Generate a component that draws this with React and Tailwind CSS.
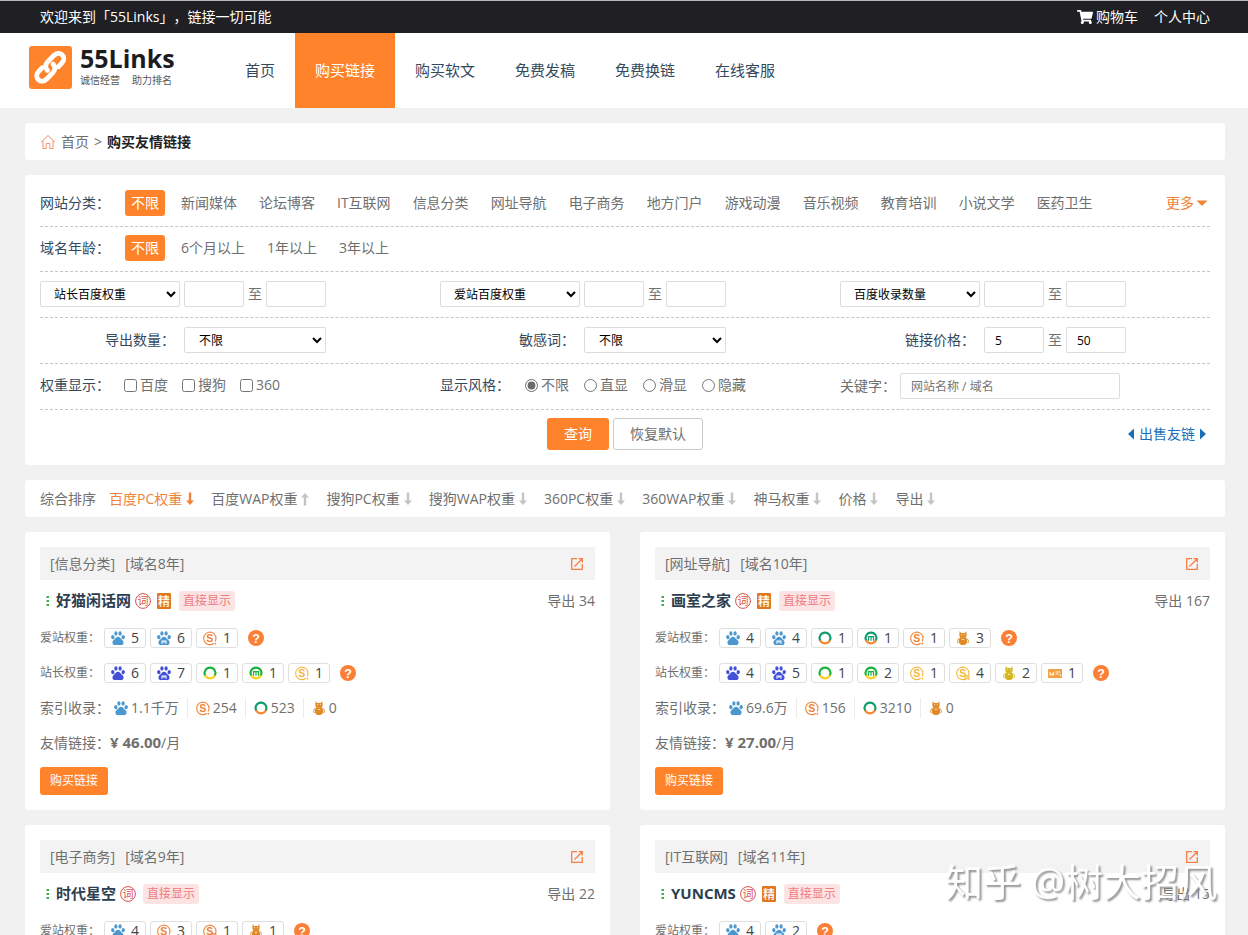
import { useState } from "react";
import clsx from "clsx";
import { FaShoppingCart } from "react-icons/fa";

// ─── 数据 ─────────────────────────────────────────────────────────────────────
const NAV = ["首页", "购买链接", "购买软文", "免费发稿", "免费换链", "在线客服"];

const CATEGORIES = [
  "不限",
  "新闻媒体",
  "论坛博客",
  "IT互联网",
  "信息分类",
  "网址导航",
  "电子商务",
  "地方门户",
  "游戏动漫",
  "音乐视频",
  "教育培训",
  "小说文学",
  "医药卫生",
];

const AGES = ["不限", "6个月以上", "1年以上", "3年以上"];

const SORTS = [
  { label: "百度PC权重" },
  { label: "百度WAP权重", up: true },
  { label: "搜狗PC权重" },
  { label: "搜狗WAP权重" },
  { label: "360PC权重" },
  { label: "360WAP权重" },
  { label: "神马权重" },
  { label: "价格" },
  { label: "导出" },
];

const SITES = [
  {
    name: "好猫闲话网",
    category: "信息分类",
    age: "域名8年",
    outLinks: 34,
    featured: true,
    aizhan: [["baidu", 5], ["baiduM", 6], ["sogou", 1]],
    chinaz: [["baidu", 6], ["baiduM", 7], ["so", 1], ["soM", 1], ["sogou", 1]],
    index: [["baidu", "1.1千万"], ["sogou", "254"], ["so", "523"], ["shenma", "0"]],
    price: "46.00",
  },
  {
    name: "画室之家",
    category: "网址导航",
    age: "域名10年",
    outLinks: 167,
    featured: true,
    aizhan: [["baidu", 4], ["baiduM", 4], ["so", 1], ["soM", 1], ["sogou", 1], ["shenma", 3]],
    chinaz: [
      ["baidu", 4],
      ["baiduM", 5],
      ["so", 1],
      ["soM", 2],
      ["sogou", 1],
      ["sogouM", 4],
      ["shenma", 2],
      ["toutiao", 1],
    ],
    index: [["baidu", "69.6万"], ["sogou", "156"], ["so", "3210"], ["shenma", "0"]],
    price: "27.00",
  },
  {
    name: "时代星空",
    category: "电子商务",
    age: "域名9年",
    outLinks: 22,
    aizhan: [["baidu", 4], ["sogou", 3], ["sogouM", 1], ["shenma", 1]],
  },
  {
    name: "YUNCMS",
    category: "IT互联网",
    age: "域名11年",
    outLinks: 15,
    featured: true,
    aizhan: [["baidu", 4], ["baiduM", 2]],
  },
];

// 爱站、站长两套图标配色
const PALETTES = {
  aizhan: { paw: "#4a98cf", top: "#109c6b", bottom: "#f7882f", s: "#f0833a", cat: "#e08a26" },
  chinaz: { paw: "#4350d8", top: "#18b33c", bottom: "#f9cf1c", s: "#f5b83d", cat: "#d6b51c" },
};

// ─── 图标 ─────────────────────────────────────────────────────────────────────
function Paw({ color, mobile }) {
  return (
    <svg viewBox="0 0 16 16" className="h-4 w-4 shrink-0">
      <g fill={color}>
        <ellipse cx="2.8" cy="7.2" rx="1.7" ry="2.1" transform="rotate(-14 2.8 7.2)" />
        <ellipse cx="5.9" cy="3.4" rx="1.6" ry="2.2" />
        <ellipse cx="10.1" cy="3.4" rx="1.6" ry="2.2" />
        <ellipse cx="13.2" cy="7.2" rx="1.7" ry="2.1" transform="rotate(14 13.2 7.2)" />
        <path d="M8 6.8c-1.9 0-2.5 1.7-3.7 2.8C3 10.8 2.1 11.6 2.5 13.3c.4 1.600 1.700 2 3.200 1.800 1.600-.3 3-.3 4.600 0 1.500.2 2.800-.2 3.200-1.800.4-1.700-.5-2.500-1.800-3.700C10.500 8.500 9.900 6.800 8 6.800z" />
      </g>
      {mobile && (
        <path d="M6 13.800v-2.800h4v2.800M8 11v2" fill="none" stroke="#fff" strokeWidth="1.1" />
      )}
    </svg>
  );
}

function Ring({ top, bottom, mobile }) {
  return (
    <svg viewBox="0 0 16 16" className="h-4 w-4 shrink-0" fill="none">
      <path d="M2.9 9.700A5.400 5.400 0 0 0 13.100 9.700" stroke={bottom} strokeWidth="2.200" />
      <path d="M3.100 10.200A5.400 5.400 0 1 1 12.900 10.200" stroke={top} strokeWidth="2.200" />
      {mobile && (
        <path d="M5.500 10.800V6.700h5v4.100M8 6.700v4.100" stroke={top} strokeWidth="1.200" />
      )}
    </svg>
  );
}

function Sogou({ color, mobile }) {
  return (
    <svg viewBox="0 0 16 16" className="h-4 w-4 shrink-0">
      <path
        d="M11.700 13.200A6.200 6.200 0 1 1 14 8.700c-.1 1.100-.4 2-.9 2.800"
        fill="none"
        stroke={color}
        strokeWidth="1.100"
      />
      <text
        x="7.800"
        y="11.700"
        textAnchor="middle"
        fontSize="10.500"
        fontWeight="700"
        fontFamily="Liberation Sans, sans-serif"
        fill={color}
      >
        S
      </text>
      <circle cx="13.400" cy="13.700" r=".9" fill={color} />
      {mobile && (
        <path d="M10 14.500v-3.800h4v3.800M12 10.700v3.800" fill="none" stroke={color} strokeWidth="1" />
      )}
    </svg>
  );
}

function Shenma({ color }) {
  return (
    <svg viewBox="0 0 16 16" className="h-4 w-4 shrink-0" fill={color}>
      <path d="M4.700 1l1.300 1.900h4L11.300 1l.4 4.200c-.1 1.200-.8 2-1.700 2.300H6c-.9-.3-1.600-1.100-1.700-2.300z" />
      <path d="M5 7.200h6c.9 1.500 1.300 3.400 1 5-.3 1.900-1.600 2.800-4 2.800s-3.700-.9-4-2.800c-.3-1.600.1-3.500 1-5z" />
      <path
        d="M4.100 8.500c-1.500.9-1.900 2.800-1 4.600M11.900 8.500c1.500.9 1.900 2.800 1 4.600"
        fill="none"
        stroke={color}
        strokeWidth="1"
      />
      <path d="M6 4.700h1.200M8.800 4.700H10M6.800 9.500h2.400" stroke="#fff" strokeWidth=".7" />
    </svg>
  );
}

function Toutiao() {
  return (
    <svg viewBox="0 0 16 16" className="h-4 w-4 shrink-0">
      <rect x="1" y="4" width="14" height="9" rx=".8" fill="#f3a044" />
      <path
        d="M3 10.800V7.200l2 3.300 1.500-3.300v3.300M8.500 7h4.800M8.500 9h3M13.300 9v2"
        fill="none"
        stroke="#fff3df"
        strokeWidth="1"
      />
    </svg>
  );
}

function EngineIcon({ type, palette }) {
  const p = PALETTES[palette];
  if (type === "baidu") return <Paw color={p.paw} />;
  if (type === "baiduM") return <Paw color={p.paw} mobile />;
  if (type === "so") return <Ring top={p.top} bottom={p.bottom} />;
  if (type === "soM") return <Ring top={p.top} bottom={p.bottom} mobile />;
  if (type === "sogou") return <Sogou color={p.s} />;
  if (type === "sogouM") return <Sogou color={p.s} mobile />;
  if (type === "shenma") return <Shenma color={p.cat} />;
  return <Toutiao />;
}

function Logo() {
  return (
    <svg viewBox="0 0 43 43" className="h-[43px] w-[43px] shrink-0">
      <rect width="43" height="43" rx="3" fill="#ff832b" />
      <g fill="none" stroke="#fff" strokeWidth="4.800" strokeLinecap="round">
        <path d="M18.500 24.500c-2.800-3-2.300-6 .3-8.800l6-6.200c2.700-2.700 6-2.900 8.300-.7 2.300 2.300 2.200 5.600-.3 8.300l-3.500 3.700" />
        <path d="M24 18c2.800 3 2.300 6-.3 8.800l-6 6.200c-2.700 2.700-6 2.900-8.300.7-2.300-2.300-2.200-5.600.3-8.300l3.500-3.700" />
      </g>
    </svg>
  );
}

function HomeIcon() {
  return (
    <svg viewBox="0 0 16 16" className="h-4 w-4 shrink-0" fill="none" stroke="#f0936a">
      <path d="M1 8.300L8 1.500l7 6.800M3 6.800v7.700h3.200V9.500h3.600v5h3.200V6.800" strokeLinejoin="round" />
    </svg>
  );
}

function SortArrow({ up, active }) {
  return (
    <svg
      viewBox="0 0 16 16"
      className={clsx("h-4 w-4 shrink-0", up && "rotate-180")}
      fill={active ? "#f0833a" : "#c4c4c4"}
    >
      <path d="M6.800 1.500h2.400v8H12L8 14 4 9.500h2.800z" />
    </svg>
  );
}

function OpenIcon() {
  return (
    <svg viewBox="0 0 14 14" className="h-3.5 w-3.5" fill="none" stroke="#f57f45" strokeWidth="1.300">
      <path d="M7 1.700H1.700v10.600h10.600V7M4.500 9.500l7.500-7.500M8.500 1.700h3.800v3.800" />
    </svg>
  );
}

function HelpIcon() {
  return (
    <svg viewBox="0 0 16 16" className="ml-1.5 h-4 w-4 shrink-0">
      <circle cx="8" cy="8" r="8" fill="#fb7f34" />
      <text
        x="8"
        y="12.500"
        textAnchor="middle"
        fontSize="12.500"
        fontWeight="700"
        fontFamily="Liberation Sans, sans-serif"
        fill="#fff"
      >
        ?
      </text>
    </svg>
  );
}

function WordBadge() {
  return (
    <svg viewBox="0 0 16 16" className="h-4 w-4 shrink-0">
      <circle cx="8" cy="8" r="7.400" fill="#fff" stroke="#d9534f" />
      <text x="8" y="12" textAnchor="middle" fontSize="11" fill="#d9534f">
        词
      </text>
    </svg>
  );
}

function FeaturedBadge() {
  return (
    <svg viewBox="0 0 16 16" className="ml-[5px] h-4 w-4 shrink-0">
      <rect x="1" width="14" height="16" rx="1" fill="#e0771c" />
      <text x="8" y="12.500" textAnchor="middle" fontSize="12" fontWeight="500" fill="#fff">
        精
      </text>
    </svg>
  );
}

// ─── 表单小组件 ───────────────────────────────────────────────────────────────
const FIELD = "h-[26px] rounded-xs border border-[#dcdcdc] bg-white text-xs text-black";

function PillRow({ label, items, children }) {
  const [active, setActive] = useState(items[0]);
  return (
    <div className="flex items-center border-b border-dashed border-[#c6c6c6] pt-2 pb-2.5">
      <span className="w-[85px] shrink-0 text-[#34495e]">{label}：</span>
      <div className="flex flex-1 gap-2.5">
        {items.map((item) => (
          <button
            key={item}
            type="button"
            onClick={() => setActive(item)}
            className={clsx(
              "h-[26px] cursor-pointer rounded-[3px] px-1.5 whitespace-nowrap",
              item === active && "bg-[#ff832b] text-white"
            )}
          >
            {item}
          </button>
        ))}
      </div>
      {children}
    </div>
  );
}

function FieldRow({ children }) {
  return (
    <div className="grid grid-cols-[400fr_400fr_370fr] border-b border-dashed border-[#c6c6c6] pt-[9px] pb-2.5">
      {children}
    </div>
  );
}

function Range({ label, from = "", to = "" }) {
  return (
    <>
      <input aria-label={`${label}最小值`} defaultValue={from} className={clsx(FIELD, "w-[60px] px-2.5")} />
      <span>至</span>
      <input aria-label={`${label}最大值`} defaultValue={to} className={clsx(FIELD, "w-[60px] px-2.5")} />
    </>
  );
}

function WeightRange({ name }) {
  return (
    <div className="flex items-center gap-1">
      <select aria-label="指标" className={clsx(FIELD, "w-[140px] pl-[9px]")}>
        <option>{name}</option>
      </select>
      <Range label={name} />
    </div>
  );
}

function LabeledSelect({ id, label }) {
  return (
    <div className="flex items-center gap-1">
      <label htmlFor={id} className="w-[140px] pr-[5px] text-right text-[#34495e]">
        {label}：
      </label>
      <select id={id} className={clsx(FIELD, "w-[142px] pl-2.5")}>
        <option>不限</option>
      </select>
    </div>
  );
}

// ─── 站点卡片 ─────────────────────────────────────────────────────────────────
function WeightRow({ label, palette, items }) {
  return (
    <div className="flex h-[35px] items-center gap-1">
      <span className="w-[60px] shrink-0 text-xs whitespace-nowrap">{label}：</span>
      {items.map(([type, value]) => (
        <span
          key={type}
          className="flex h-5 w-[42px] items-center justify-between rounded-[3px] border border-[#dfdfdf] pr-1.5 pl-[5px] text-[#444]"
        >
          <EngineIcon type={type} palette={palette} />
          {value}
        </span>
      ))}
      <HelpIcon />
    </div>
  );
}

function SiteCard({ site }) {
  return (
    <article className="rounded-[3px] bg-white p-[15px]">
      <div className="flex h-[33px] items-center justify-between bg-[#f3f3f3] pr-[11px] pl-2.5">
        <span className="flex gap-2.5">
          <span>[{site.category}]</span>
          <span>[{site.age}]</span>
        </span>
        <a href="#open" aria-label={`打开${site.name}`}>
          <OpenIcon />
        </a>
      </div>

      <div className="flex h-10 items-center pt-0.5 pl-1.5">
        <svg viewBox="0 0 4 12" className="mr-1.5 h-3 w-1" fill="#3fae4d">
          <path d="M.5 1h2.500v2H.5zM.5 5h2.500v2H.5zM.5 9h2.500v2H.5z" />
        </svg>
        <h3 className="mr-1 text-[15px] font-bold text-[#2c3e50]">{site.name}</h3>
        <WordBadge />
        {site.featured && <FeaturedBadge />}
        <span className="ml-[7px] h-5 rounded-[3px] bg-[#fde4e4] px-1 text-xs leading-5 text-[#ee7b7f]">
          直接显示
        </span>
        <span className="ml-auto">导出 {site.outLinks}</span>
      </div>

      <WeightRow label="爱站权重" palette="aizhan" items={site.aizhan} />
      {site.chinaz && <WeightRow label="站长权重" palette="chinaz" items={site.chinaz} />}

      {site.index && (
        <div className="flex h-[35px] items-center">
          <span className="w-[73px]">索引收录：</span>
          <ul className="flex divide-x divide-[#ececec]">
            {site.index.map(([type, value]) => (
              <li key={type} className="flex items-center gap-0.5 pr-2 pl-[7px] first:pl-0">
                <EngineIcon type={type} palette="aizhan" />
                {value}
              </li>
            ))}
          </ul>
        </div>
      )}

      {site.price && (
        <>
          <p className="h-[35px] leading-[35px]">
            友情链接：<b className="text-[15px]">¥ {site.price}</b>/月
          </p>
          <button
            type="button"
            className="mt-[7px] block h-7 w-[68px] cursor-pointer rounded-[3px] bg-[#ff832b] text-xs text-white"
          >
            购买链接
          </button>
        </>
      )}
    </article>
  );
}

// ─── 页面 ─────────────────────────────────────────────────────────────────────
export default function App() {
  const [sort, setSort] = useState("百度PC权重");

  return (
    <div className="min-h-screen bg-[#f1f1f1] font-['Open_Sans','Noto_Sans_CJK_SC',sans-serif] text-sm text-[#6f6f6f]">
      {/* 顶栏 */}
      <div className="flex h-[33px] items-center justify-between border-t border-[#b5bab9] bg-[#202024] pr-[38px] pl-10 text-white">
        <span className="[text-spacing-trim:space-all]">欢迎来到「55Links」，链接一切可能</span>
        <div className="flex items-center gap-4">
          <a href="#cart" className="flex items-center gap-[3px]">
            <FaShoppingCart className="h-4 w-4" />
            购物车
          </a>
          <a href="#me">个人中心</a>
        </div>
      </div>

      {/* 导航 */}
      <header className="flex h-[75px] bg-white pl-[29px]">
        <a href="#home" className="flex w-[196px] shrink-0 items-center gap-2 pb-[6px]">
          <Logo />
          <span className="flex flex-col pb-1">
            <span className="text-[25px] leading-7 font-bold text-[#1c1c1f]">55Links</span>
            <span className="flex gap-3 text-[10px] leading-4 text-[#555]">
              <span>诚信经营</span>
              <span>助力排名</span>
            </span>
          </span>
        </a>
        <nav className="flex text-[15px]">
          {NAV.map((item) => (
            <a
              key={item}
              href="#nav"
              className={clsx(
                "flex items-center px-5 whitespace-nowrap",
                item === "购买链接" ? "bg-[#ff832b] text-white" : "text-[#34495e]"
              )}
            >
              {item}
            </a>
          ))}
        </nav>
      </header>

      <main className="flex flex-col gap-[15px] py-[15px] pr-[23px] pl-[25px]">
        {/* 面包屑 */}
        <div className="flex h-[37px] items-center gap-[5px] rounded-[3px] bg-white px-[15px]">
          <HomeIcon />
          <a href="#home">首页</a>
          <span>&gt;</span>
          <b className="text-[#222]">购买友情链接</b>
        </div>

        {/* 筛选 */}
        <form className="rounded-[3px] bg-white px-[15px] pt-[7px] pb-[15px]">
          <PillRow label="网站分类" items={CATEGORIES}>
            <button type="button" className="flex cursor-pointer items-center gap-0.5 pr-0.5 text-[#f08335]">
              更多
              <svg viewBox="0 0 12 12" className="h-3 w-3" fill="#f08335">
                <path d="M.5 3.500h11L6 9z" />
              </svg>
            </button>
          </PillRow>
          <PillRow label="域名年龄" items={AGES} />

          <FieldRow>
            <WeightRange name="站长百度权重" />
            <WeightRange name="爱站百度权重" />
            <WeightRange name="百度收录数量" />
          </FieldRow>

          <FieldRow>
            <LabeledSelect id="out-count" label="导出数量" />
            <LabeledSelect id="sensitive" label="敏感词" />
            <div className="flex items-center gap-1">
              <span className="w-[140px] pr-[5px] text-right text-[#34495e]">链接价格：</span>
              <Range label="链接价格" from="5" to="50" />
            </div>
          </FieldRow>

          <FieldRow>
            <div className="flex items-center pb-0.5">
              <span className="w-[84px] text-[#34495e]">权重显示：</span>
              <div className="flex gap-[14px]">
                {["百度", "搜狗", "360"].map((item) => (
                  <label key={item} className="flex items-center gap-[3px]">
                    <input type="checkbox" className="h-[13px] w-[13px]" />
                    {item}
                  </label>
                ))}
              </div>
            </div>
            <div className="flex items-center pb-0.5">
              <span className="w-[85px] text-[#34495e]">显示风格：</span>
              <div className="flex gap-[15px]">
                {["不限", "直显", "滑显", "隐藏"].map((item) => (
                  <label key={item} className="flex items-center gap-[3px]">
                    <input
                      type="radio"
                      name="style"
                      defaultChecked={item === "不限"}
                      className="h-[13px] w-[13px] accent-[#6a6a6a]"
                    />
                    {item}
                  </label>
                ))}
              </div>
            </div>
            <div className="flex items-center gap-1">
              <label htmlFor="keyword" className="w-14 shrink-0">
                关键字：
              </label>
              <input
                id="keyword"
                placeholder="网站名称 / 域名"
                className={clsx(FIELD, "w-[220px] px-2.5 placeholder:text-[#757575]")}
              />
            </div>
          </FieldRow>

          <div className="grid grid-cols-[1fr_auto_1fr] items-center pt-2">
            <div className="col-start-2 flex gap-1">
              <button type="button" className="h-8 w-[62px] cursor-pointer rounded-[3px] bg-[#ff832b] text-white">
                查询
              </button>
              <button
                type="reset"
                className="h-8 w-[90px] cursor-pointer rounded-[3px] border border-[#c9c9c9] bg-white"
              >
                恢复默认
              </button>
            </div>
            <a href="#sell" className="flex items-center gap-1 justify-self-end pr-[3px] text-[#1b6fb8]">
              <svg viewBox="0 0 8 12" className="h-3 w-2" fill="currentColor">
                <path d="M7 .5v11L1 6z" />
              </svg>
              出售友链
              <svg viewBox="0 0 8 12" className="h-3 w-2" fill="currentColor">
                <path d="M1 .5v11L7 6z" />
              </svg>
            </a>
          </div>
        </form>

        {/* 排序 */}
        <div className="flex h-[37px] items-center gap-[13px] rounded-[3px] bg-white px-[15px]">
          <span>综合排序</span>
          {SORTS.map(({ label, up }) => (
            <button
              key={label}
              type="button"
              onClick={() => setSort(label)}
              className={clsx(
                "flex cursor-pointer items-center whitespace-nowrap",
                label === sort && "text-[#f0833a]"
              )}
            >
              {label}
              <SortArrow up={up} active={label === sort} />
            </button>
          ))}
        </div>

        {/* 列表 */}
        <div className="grid grid-cols-2 gap-x-[30px] gap-y-[15px]">
          {SITES.map((site) => (
            <SiteCard key={site.name} site={site} />
          ))}
        </div>
      </main>

      {/* 水印 */}
      <p className="pointer-events-none fixed right-[31px] bottom-[26px] text-[38px] leading-[56px] text-white opacity-90 [text-shadow:2px_2px_2px_#888]">
        知乎 @树大招风
      </p>
    </div>
  );
}
